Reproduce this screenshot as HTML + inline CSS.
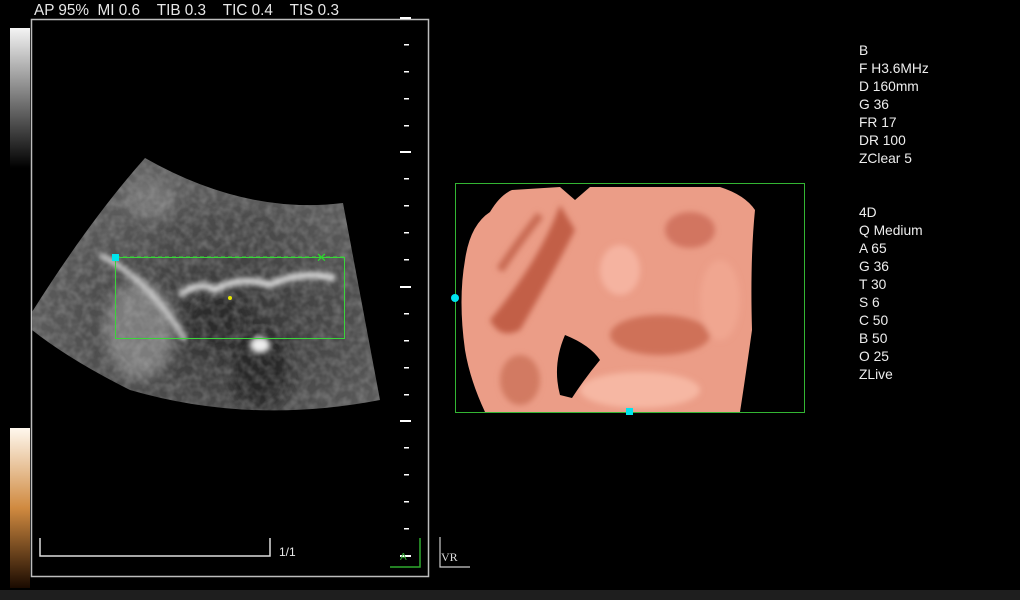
<!DOCTYPE html>
<html><head><meta charset="utf-8"><style>
html,body{margin:0;padding:0;background:#000;width:1020px;height:600px;overflow:hidden;font-family:"Liberation Sans","DejaVu Sans",sans-serif;}
.t{position:absolute;color:#e8e8e8;font-size:14px;white-space:pre;}
.r{position:absolute;left:859px;color:#eee;font-size:13.8px;line-height:18px;}
</style></head><body>
<div class="t" style="left:34px;top:2px;font-size:15.3px;">AP 95%  MI 0.6    TIB 0.3    TIC 0.4    TIS 0.3</div>
<svg width="1020" height="600" style="position:absolute;left:0;top:0">
<defs>
<linearGradient id="g1" x1="0" y1="0" x2="0" y2="1"><stop offset="0" stop-color="#f4f4f4"/><stop offset="1" stop-color="#000"/></linearGradient>
<linearGradient id="g2" x1="0" y1="0" x2="0" y2="1"><stop offset="0" stop-color="#fff8ee"/><stop offset="0.5" stop-color="#d08a40"/><stop offset="1" stop-color="#1a0a00"/></linearGradient>
<radialGradient id="sec" cx="0.55" cy="0.65" r="0.6"><stop offset="0" stop-color="#303030"/><stop offset="1" stop-color="#606060"/></radialGradient>
<filter id="bl"><feGaussianBlur stdDeviation="3"/></filter>
<filter id="bl2"><feGaussianBlur stdDeviation="6"/></filter>
<filter id="noise" x="0" y="0" width="100%" height="100%"><feTurbulence type="fractalNoise" baseFrequency="0.12" numOctaves="2" seed="3"/><feColorMatrix type="matrix" values="0 0 0 0 0.5  0 0 0 0 0.5  0 0 0 0 0.5  0 0 0 1.6 -0.5"/></filter>
<clipPath id="cs"><path d="M145 158 Q245 215 343 203 L380 400 Q250 425 130 390 Q70 360 32 330 L32 312 Q90 220 145 158Z"/></clipPath>
</defs>
<rect x="10" y="28" width="20" height="140" fill="url(#g1)"/>
<rect x="10" y="428" width="20" height="160" fill="url(#g2)"/>
<rect x="31.5" y="19.5" width="397" height="557" fill="none" stroke="#bdbdbd" stroke-width="1.5"/>
<rect x="0" y="590" width="1020" height="10" fill="#1e1e1e"/>
<!-- sector -->
<path d="M145 158 Q245 215 343 203 L380 400 Q250 425 130 390 Q70 360 32 330 L32 312 Q90 220 145 158Z" fill="url(#sec)"/>
<g clip-path="url(#cs)">
<g filter="url(#bl2)" opacity="0.8">
<ellipse cx="140" cy="330" rx="35" ry="50" fill="#8a8a8a"/>
<ellipse cx="260" cy="370" rx="30" ry="40" fill="#222"/>
<ellipse cx="215" cy="320" rx="30" ry="25" fill="#2a2a2a"/>
<ellipse cx="150" cy="200" rx="25" ry="20" fill="#7a7a7a"/>
<ellipse cx="230" cy="230" rx="60" ry="18" fill="#4a4a4a"/>
</g>
<rect x="30" y="150" width="360" height="280" filter="url(#noise)" opacity="0.35"/>
</g>
<g filter="url(#bl)">
<path d="M100 255 Q150 280 185 340" stroke="#d8d8d8" stroke-width="5" fill="none"/>
<path d="M180 295 Q200 280 215 290 Q240 275 270 285 Q300 270 335 278" stroke="#e8e8e8" stroke-width="6" fill="none"/>
<ellipse cx="260" cy="345" rx="10" ry="8" fill="#eee"/>
</g>
<rect x="115.5" y="257.5" width="229" height="81" fill="none" stroke="#3ad43a" stroke-width="1"/>
<line x1="116" y1="257" x2="345" y2="257" stroke="#3ad43a" stroke-dasharray="4,3"/>
<rect x="112" y="254" width="7" height="7" fill="#00e5ee"/>
<text x="316" y="262" fill="#2cd82c" font-size="13" font-weight="bold">✕</text>
<circle cx="230" cy="298" r="2" fill="#e6e600"/>
<!-- ticks -->
<g fill="#fff">
<rect x="400" y="17" width="11" height="2"/>
<rect x="404" y="44" width="5" height="1.5"/><rect x="404" y="71" width="5" height="1.5"/><rect x="404" y="98" width="5" height="1.5"/><rect x="404" y="125" width="5" height="1.5"/>
<rect x="400" y="151" width="11" height="2"/>
<rect x="404" y="178" width="5" height="1.5"/><rect x="404" y="205" width="5" height="1.5"/><rect x="404" y="232" width="5" height="1.5"/><rect x="404" y="259" width="5" height="1.5"/>
<rect x="400" y="286" width="11" height="2"/>
<rect x="404" y="313" width="5" height="1.5"/><rect x="404" y="340" width="5" height="1.5"/><rect x="404" y="367" width="5" height="1.5"/><rect x="404" y="394" width="5" height="1.5"/>
<rect x="400" y="420" width="11" height="2"/>
<rect x="404" y="447" width="5" height="1.5"/><rect x="404" y="474" width="5" height="1.5"/><rect x="404" y="501" width="5" height="1.5"/><rect x="404" y="528" width="5" height="1.5"/>
<rect x="400" y="555" width="11" height="2"/>
</g>
<path d="M40 538 V556 H270 V538" stroke="#ddd" stroke-width="1.5" fill="none"/>
<path d="M420 538 V567 H390" stroke="#2faa2f" stroke-width="1.5" fill="none"/>
<text x="400" y="560" fill="#2faa2f" font-size="10">A</text>
<path d="M440 537 V567 H470" stroke="#ccc" stroke-width="1.2" fill="none"/>
<text x="441" y="561" fill="#ddd" font-size="12" font-family="Liberation Serif">VR</text>
<!-- 3D face -->
<path d="M512 190 L560 187 L575 200 L590 187 L720 187 Q745 195 755 210 Q750 260 752 330 Q745 380 740 412 L485 412 Q470 380 465 350 Q458 300 465 260 Q470 225 490 212 Q500 195 512 190Z" fill="#eb9d87"/>
<g filter="url(#bl)">
<path d="M560 205 Q540 260 490 320 Q500 340 520 330 Q555 270 575 230Z" fill="#c25f47"/>
<path d="M540 215 Q520 240 500 270" stroke="#c86a52" stroke-width="8" fill="none"/>
<ellipse cx="660" cy="335" rx="50" ry="20" fill="#cf7159"/>
<ellipse cx="620" cy="270" rx="20" ry="25" fill="#f5b3a0"/>
<ellipse cx="690" cy="230" rx="25" ry="18" fill="#d27560"/>
<ellipse cx="520" cy="380" rx="20" ry="25" fill="#d27a62"/>
<ellipse cx="720" cy="300" rx="20" ry="40" fill="#f0a690"/>
<ellipse cx="640" cy="390" rx="60" ry="18" fill="#f6b7a3"/>
</g>
<path d="M565 335 Q590 345 600 360 Q585 378 572 398 L560 395 Q552 365 565 335Z" fill="#000"/>
<rect x="455.5" y="183.5" width="349" height="229" fill="none" stroke="#33b533" stroke-width="1"/>
<circle cx="455" cy="298" r="4" fill="#00e5ee"/>
<rect x="626" y="408" width="7" height="7" fill="#00e5ee"/>
</svg>
<div class="t" style="left:279px;top:545px;font-size:12px;">1/1</div>
<div class="r" style="top:42px">B<br>F H3.6MHz<br>D 160mm<br>G 36<br>FR 17<br>DR 100<br>ZClear 5</div>
<div class="r" style="top:204px">4D<br>Q Medium<br>A 65<br>G 36<br>T 30<br>S 6<br>C 50<br>B 50<br>O 25<br>ZLive</div>
</body></html>
